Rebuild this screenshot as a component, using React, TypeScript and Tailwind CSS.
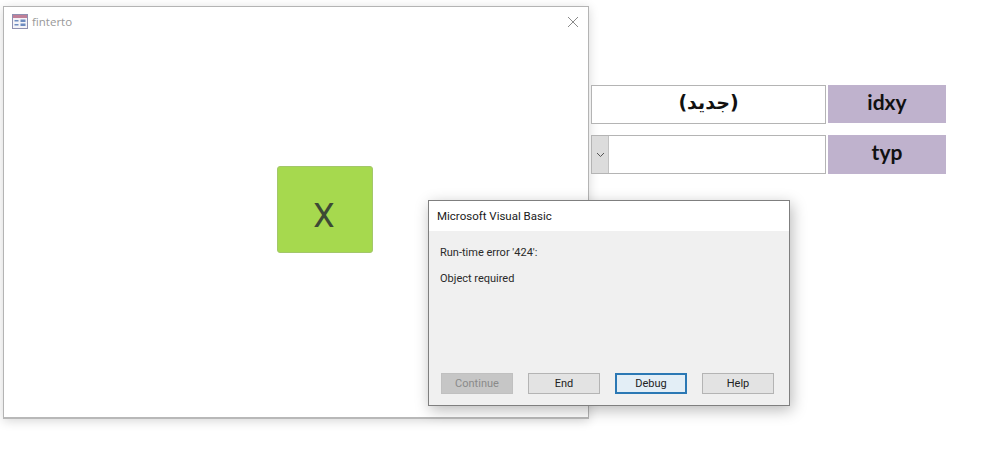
import React from "react";

function FormIcon() {
  return (
    <svg width="16" height="15" viewBox="0 0 16 15" className="shrink-0">
      <rect x="0.5" y="0.5" width="15" height="14" fill="#f4f3f8" stroke="#8f8fb0" />
      <rect x="1" y="1" width="14" height="3" fill="#c07f98" />
      <rect x="2.5" y="6" width="4" height="1.5" fill="#6d8bc0" />
      <rect x="2.5" y="10" width="4" height="1.5" fill="#6d8bc0" />
      <rect x="8.5" y="5.5" width="5" height="2.5" fill="#6d8bc0" />
      <rect x="8.5" y="9.5" width="5" height="2.5" fill="#6d8bc0" />
    </svg>
  );
}

function DialogButton({ label, variant }: { label: string; variant?: "disabled" | "default" }) {
  const cls =
    variant === "disabled"
      ? "bg-[#c6c6c6] border-[#c0c0c0] text-[#8a8a8a]"
      : variant === "default"
        ? "bg-[#e3eef6] border-2 border-[#2b78b4] text-[#222]"
        : "bg-[#e3e3e3] border-[#b4b4b4] text-[#222]";
  return (
    <div className={`w-[72px] h-[21px] border flex items-center justify-center pt-[1px] text-[11px] ${cls}`}>
      {label}
    </div>
  );
}

export default function App() {
  return (
    <div className="relative w-[1000px] h-[454px] bg-white overflow-hidden font-['Roboto','Liberation_Sans',sans-serif]">
      {/* Access form window */}
      <div className="absolute left-[3px] top-[6px] w-[586px] h-[413px] bg-white border border-[#b4b4b4] border-b-2 border-b-[#b8b8b8] shadow-[0_2px_10px_rgba(0,0,0,0.16)] flex flex-col">
        <div className="flex items-center justify-between pl-[8px] pr-[9px] pt-[6px]">
          <div className="flex items-center gap-[4px]">
            <FormIcon />
            <span className="text-[11.5px] text-[#999] font-['Open_Sans',sans-serif]">finterto</span>
          </div>
          <svg width="12" height="12" viewBox="0 0 12 12" className="mt-[1px]">
            <path d="M1 1 L11 11 M11 1 L1 11" stroke="#8a8a8a" strokeWidth="1" fill="none" />
          </svg>
        </div>
        <div className="flex-1 pl-[273px] pt-[136px]">
          <div className="w-[96px] h-[87px] rounded-[3px] bg-[#a6d94e] border border-[#a3c76a] flex items-center justify-center pt-[11px] pr-[2px] text-[34px] text-[#3d4a35]">
            X
          </div>
        </div>
      </div>

      {/* Form fields on the right */}
      <div className="absolute left-[591px] top-[85px] flex flex-col gap-[11px]">
        <div className="flex gap-[2px]">
          <div
            dir="rtl"
            className="w-[235px] h-[39px] border border-[#b4b4b4] bg-white flex items-center justify-center pb-[5px] text-[19px] font-bold text-[#111] font-['DejaVu_Sans',sans-serif]"
          >
            (جديد)
          </div>
          <div className="w-[118px] h-[38px] bg-[#bfb2cd] flex items-center justify-center pb-[5px] text-[21px] font-bold text-[#111] font-['Lato',sans-serif]">
            idxy
          </div>
        </div>
        <div className="flex gap-[2px]">
          <div className="w-[235px] h-[39px] border border-[#b4b4b4] bg-white flex">
            <div className="w-[17px] h-full bg-[#dcdcdc] border-r border-[#c2c2c2] flex items-center justify-center">
              <svg width="9" height="6" viewBox="0 0 9 6">
                <path d="M1 1 L4.5 4.5 L8 1" stroke="#555" strokeWidth="1" fill="none" />
              </svg>
            </div>
          </div>
          <div className="w-[118px] h-[39px] bg-[#bfb2cd] flex items-center justify-center pb-[6px] text-[21px] font-bold text-[#111] font-['Lato',sans-serif]">
            typ
          </div>
        </div>
      </div>

      {/* VB error dialog */}
      <div className="absolute left-[428px] top-[200px] w-[362px] h-[206px] bg-[#f0f0f0] border border-[#7f7f7f] shadow-[2px_4px_14px_rgba(0,0,0,0.28)] flex flex-col text-[#222]">
        <div className="h-[30px] bg-white flex items-center pl-[8px] pt-[1px] text-[11.5px] text-[#1a1a1a]">
          Microsoft Visual Basic
        </div>
        <div className="flex-1 pl-[11px] pt-[14px] text-[11px] text-[#2a2a2a]">
          <div className="h-[16px] leading-[16px]">Run-time error '424':</div>
          <div className="h-[16px] leading-[16px] mt-[10px]">Object required</div>
        </div>
        <div className="flex gap-[15px] pl-[12px] pb-[11px]">
          <DialogButton label="Continue" variant="disabled" />
          <DialogButton label="End" />
          <DialogButton label="Debug" variant="default" />
          <DialogButton label="Help" />
        </div>
      </div>
    </div>
  );
}
